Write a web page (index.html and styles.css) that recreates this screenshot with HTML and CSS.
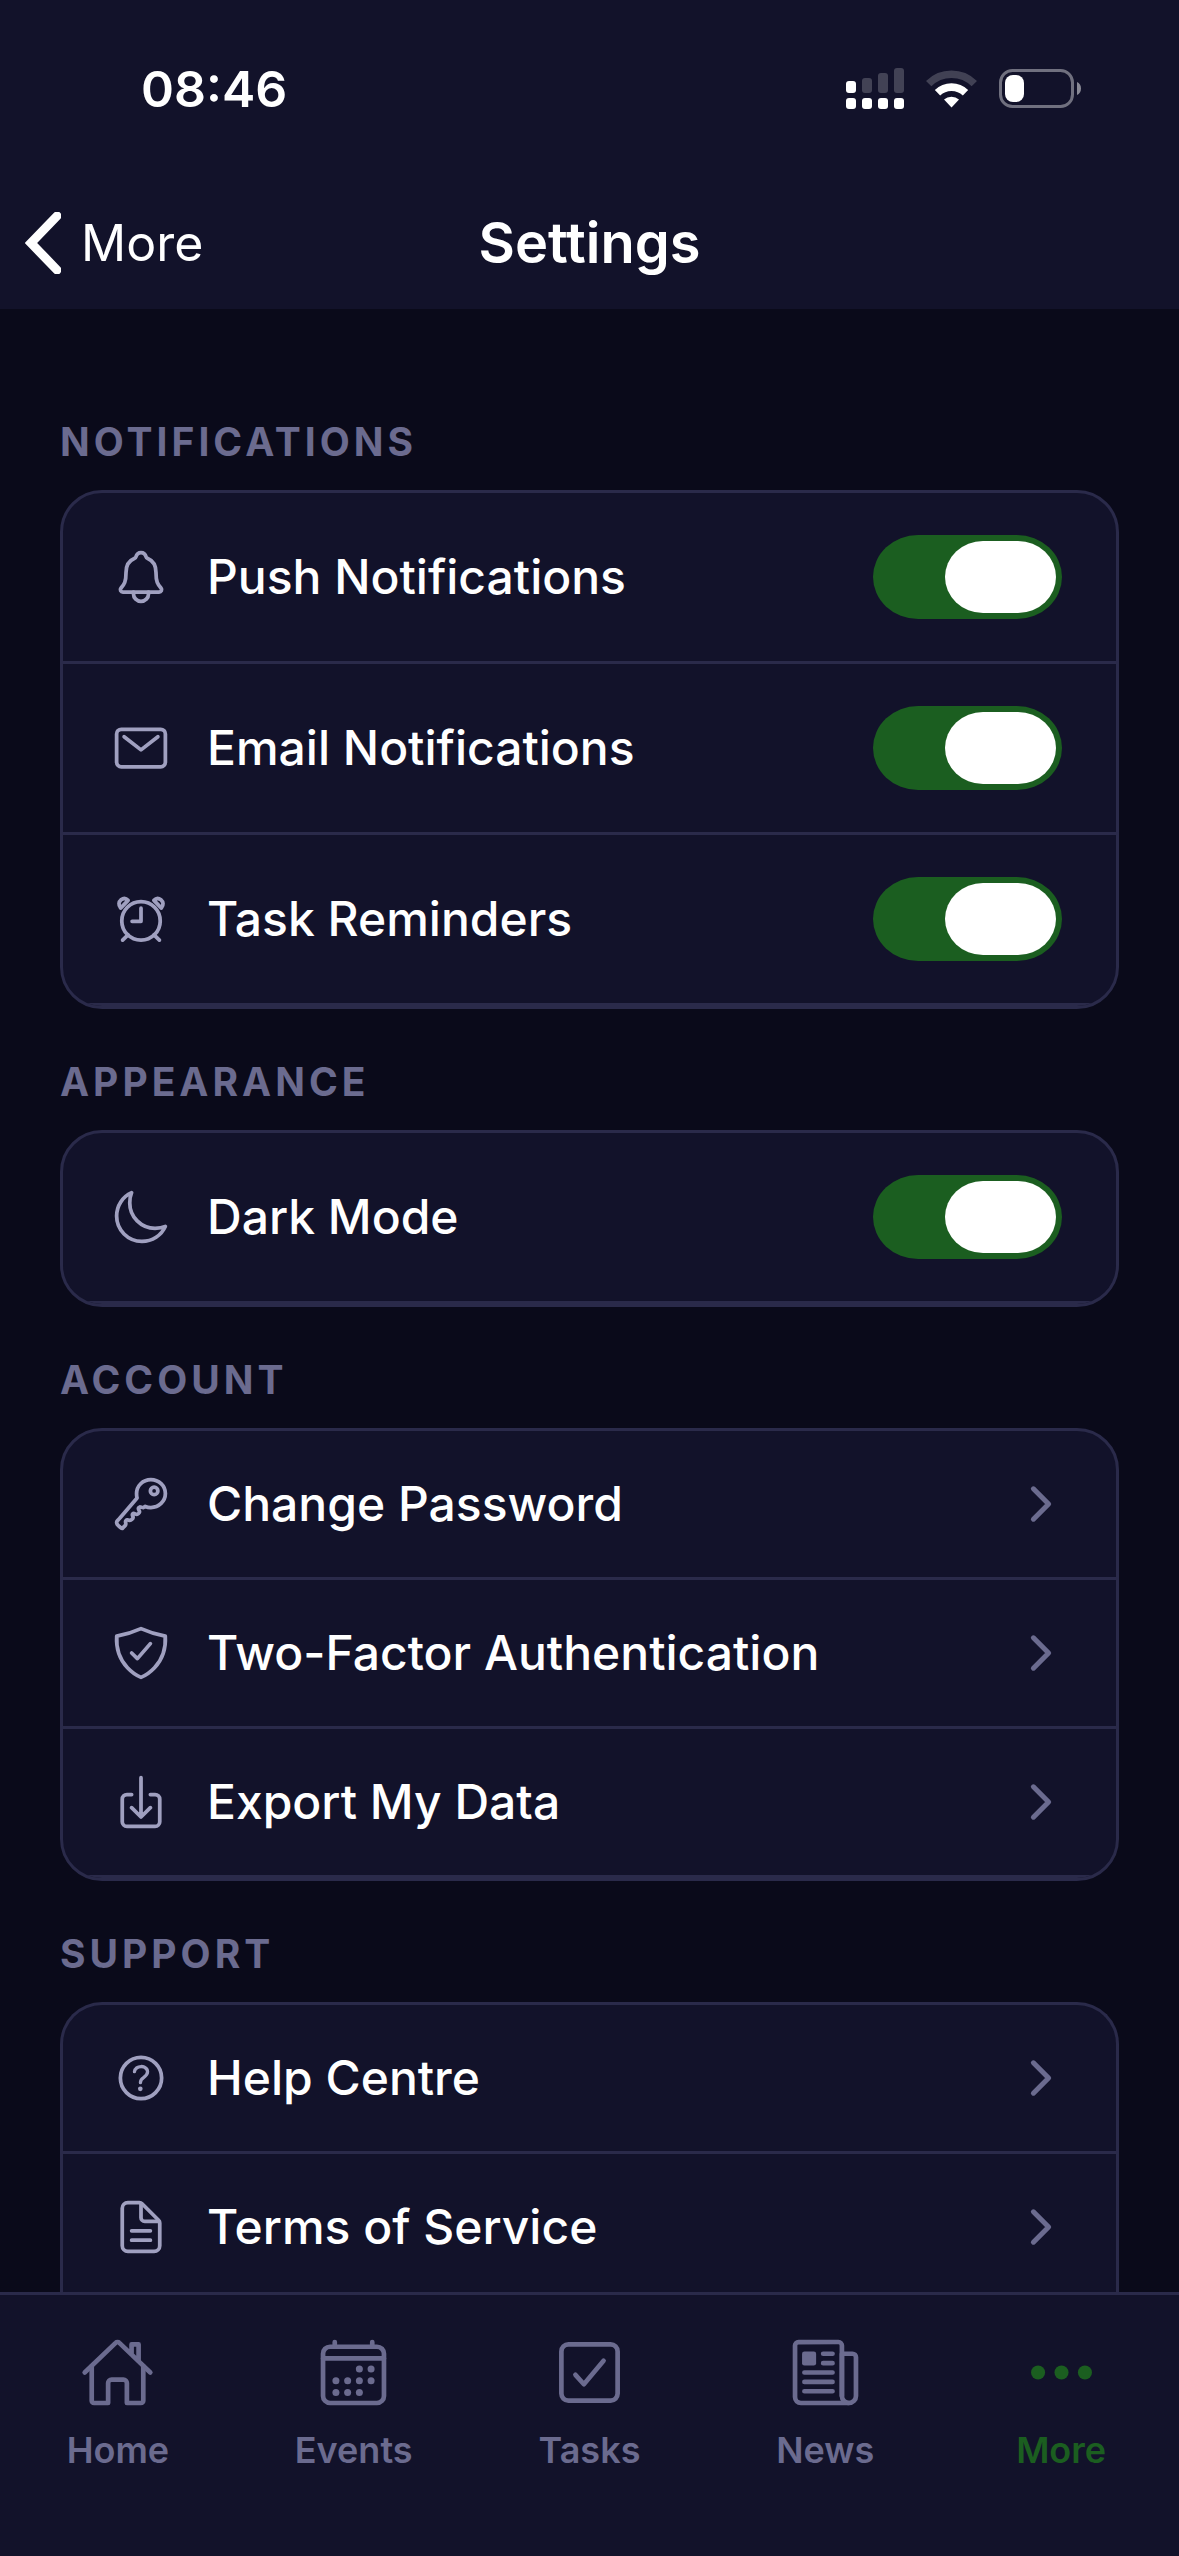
FILE: index.html
```html
<!DOCTYPE html>
<html lang="en">
<head>

<meta charset="UTF-8">
<meta name="viewport" content="width=device-width">

<title>Settings</title>

<link rel="stylesheet" href="styles.css">

</head>
<body>

<header class="header">
	<div class="statusbar">
		<time class="clock">08:46</time>
		<div class="indicators">
			<svg width="58" height="42" viewBox="0 0 58 42" fill="#fff">
				<rect x="0" y="13" width="10" height="12" rx="3"/>
				<g opacity=".2">
					<rect x="16" y="10" width="10" height="15" rx="3"/>
					<rect x="32" y="5" width="10" height="20" rx="3"/>
					<rect x="48" y="0" width="10" height="25" rx="3"/>
				</g>
				<rect x="0" y="30" width="10" height="11" rx="3"/>
				<rect x="16" y="30" width="10" height="11" rx="3"/>
				<rect x="32" y="30" width="10" height="11" rx="3"/>
				<rect x="48" y="30" width="10" height="11" rx="3"/>
			</svg>
			<svg width="51" height="38" viewBox="0 0 51 38" fill="none" stroke="#fff">
				<path d="M2.7 13.6A32.5 32.5 0 0 1 48.3 13.6" stroke-width="7.6" opacity=".2"/>
				<path d="M11.5 22.8A20 20 0 0 1 39.5 22.8" stroke-width="7.6"/>
				<path d="M18 29.6A11 11 0 0 1 33 29.6L25.5 37.5z" fill="#fff" stroke="none"/>
			</svg>
			<svg width="82" height="39" viewBox="0 0 82 39">
				<rect x="1.5" y="1.5" width="72" height="36" rx="12" fill="none" stroke="#fff" stroke-width="3" opacity=".4"/>
				<path d="M78 13c2.5 1 4 3.5 4 6.5s-1.5 5.5-4 6.5z" fill="#fff" opacity=".5"/>
				<rect x="6" y="6" width="19" height="27" rx="8" fill="#fff"/>
			</svg>
		</div>
	</div>
	<nav class="navbar">
		<a class="back" href="#more">
			<svg width="36" height="62" viewBox="0 0 36 62"><path d="M32 4L6 31l26 27" fill="none" stroke="#fff" stroke-width="9" stroke-linecap="round"/></svg>
			More
		</a>
		<h1 class="title">Settings</h1>
	</nav>
</header>

<main class="content">
	<section>
		<h2 class="heading">Notifications</h2>
		<div class="card">
			<label class="row">
				<svg class="icon" viewBox="0 0 512 512"><path d="M427.68 351.43C402 320 383.87 304 383.87 217.35 383.87 138 343.35 109.73 310 96c-4.43-1.82-8.6-6-9.95-10.55C294.2 65.54 277.8 48 256 48s-38.21 17.55-44 37.47c-1.35 4.6-5.52 8.71-9.95 10.53-33.39 13.75-73.87 41.92-73.87 121.35C128.13 304 110 320 84.32 351.43 73.68 364.45 83 384 101.61 384h308.88c18.51 0 27.77-19.61 17.19-32.57z"/><path d="M320 384v16a64 64 0 01-128 0v-16"/></svg>
				<span class="name">Push Notifications</span>
				<input class="toggle" type="checkbox" name="push" checked>
			</label>
			<label class="row">
				<svg class="icon" viewBox="0 0 512 512"><rect x="48" y="96" width="416" height="320" rx="40"/><path d="M112 160l144 112 144-112"/></svg>
				<span class="name">Email Notifications</span>
				<input class="toggle" type="checkbox" name="email" checked>
			</label>
			<label class="row">
				<svg class="icon" viewBox="0 0 512 512"><circle cx="256" cy="272" r="164"/><path d="M256 164v112h-76M145 391l-46 45M367 391l46 45"/><path d="M146 97C128 78 104 78 86 92 64 110 62 140 82 163z"/><path d="M366 97c18-19 42-19 60-5 22 18 24 48 4 71z"/></svg>
				<span class="name">Task Reminders</span>
				<input class="toggle" type="checkbox" name="tasks" checked>
			</label>
		</div>
	</section>

	<section>
		<h2 class="heading">Appearance</h2>
		<div class="card">
			<label class="row">
				<svg class="icon" viewBox="0 0 512 512"><path d="M160 136c0-30.62 4.51-61.61 16-88C99.57 81.27 48 159.32 48 248c0 119.29 96.71 216 216 216 88.68 0 166.73-51.57 200-128-26.39 11.49-57.38 16-88 16-119.29 0-216-96.71-216-216z"/></svg>
				<span class="name">Dark Mode</span>
				<input class="toggle" type="checkbox" name="dark" checked>
			</label>
		</div>
	</section>

	<section>
		<h2 class="heading">Account</h2>
		<div class="card">
			<a class="row" href="#password">
				<svg class="icon" viewBox="0 0 512 512"><path d="M218.1 167.17c0 13 0 25.6 4.1 37.4-43.1 50.6-156.9 184.3-167.5 194.5a20.17 20.17 0 00-6.7 15c0 8.5 5.2 16.7 9.6 21.3 6.6 6.9 34.8 33 40 28 15.4-15 18.5-19 24.8-25.2 9.5-9.3-1-28.3 2.3-36s6.8-9.2 12.5-10.4 15.8 2.9 23.7 3c8.3.1 12.8-3.4 19-9.2 5-4.6 8.6-8.9 8.7-15.6.2-9-12.8-20.9-3.1-30.4s23.7 6.2 34 5 22.8-15.5 24.1-21.6-11.7-21.8-9.7-30.7c.7-3 6.8-10 11.4-11s25 6.9 29.6 5.9c5.6-1.2 12.1-7.1 17.4-10.4 15.5 6.7 29.6 9.4 47.7 9.4 68.5 0 124-53.4 124-119.2S408.5 48 340 48s-121.9 53.37-121.9 119.17zM400 144a32 32 0 11-32-32 32 32 0 0132 32z"/></svg>
				<span class="name">Change Password</span>
				<svg class="chevron" viewBox="0 0 512 512"><path d="M184 112l144 144-144 144"/></svg>
			</a>
			<a class="row" href="#two-factor">
				<svg class="icon" viewBox="0 0 512 512"><path d="M336 176L225.2 304 176 255.8"/><path d="M463.1 112.37C373.68 96.33 336.71 84.45 256 48c-80.71 36.45-117.68 48.33-207.1 64.37C32.7 369.13 240.58 457.79 256 464c15.42-6.21 223.3-94.87 207.1-351.63z"/></svg>
				<span class="name">Two-Factor Authentication</span>
				<svg class="chevron" viewBox="0 0 512 512"><path d="M184 112l144 144-144 144"/></svg>
			</a>
			<a class="row" href="#export">
				<svg class="icon" viewBox="0 0 512 512"><path d="M336 192h40a40 40 0 0140 40v192a40 40 0 01-40 40H136a40 40 0 01-40-40V232a40 40 0 0140-40h40"/><path d="M336 304l-80 80-80-80M256 48v320"/></svg>
				<span class="name">Export My Data</span>
				<svg class="chevron" viewBox="0 0 512 512"><path d="M184 112l144 144-144 144"/></svg>
			</a>
		</div>
	</section>

	<section>
		<h2 class="heading">Support</h2>
		<div class="card open">
			<a class="row" href="#help">
				<svg class="icon" viewBox="0 0 512 512"><circle cx="256" cy="256" r="176"/><path stroke-width="28" d="M200 202.29s.84-17.5 19.57-32.57C230.68 160.77 244 158.18 256 158c10.93-.14 20.69 1.67 26.53 4.45 10 4.76 29.47 16.38 29.47 41.09 0 26-17 37.81-36.37 50.8S251 281.43 251 296"/><circle class="solid" cx="250" cy="348" r="20"/></svg>
				<span class="name">Help Centre</span>
				<svg class="chevron" viewBox="0 0 512 512"><path d="M184 112l144 144-144 144"/></svg>
			</a>
			<a class="row" href="#terms">
				<svg class="icon" viewBox="0 0 512 512"><path d="M416 221.25V416a48 48 0 01-48 48H144a48 48 0 01-48-48V96a48 48 0 0148-48h98.75a32 32 0 0122.62 9.37l141.26 141.26a32 32 0 019.37 22.62z"/><path d="M256 56v120a32 32 0 0032 32h120M176 288h160M176 368h160"/></svg>
				<span class="name">Terms of Service</span>
				<svg class="chevron" viewBox="0 0 512 512"><path d="M184 112l144 144-144 144"/></svg>
			</a>
		</div>
	</section>
</main>

<nav class="tabbar">
	<a class="tab" href="#home">
		<svg class="tabicon" viewBox="0 0 512 512"><path d="M80 212v236a16 16 0 0016 16h96V328a24 24 0 0124-24h80a24 24 0 0124 24v136h96a16 16 0 0016-16V212"/><path d="M480 256L266.89 52c-5-5.28-16.69-5.34-21.78 0L32 256M400 179V64h-48v69"/></svg>
		Home
	</a>
	<a class="tab" href="#events">
		<svg class="tabicon" viewBox="0 0 512 512"><rect x="48" y="80" width="416" height="384" rx="48"/><path d="M128 48v32M384 48v32M464 160H48"/><g class="solid"><circle cx="296" cy="232" r="24"/><circle cx="376" cy="232" r="24"/><circle cx="136" cy="312" r="24"/><circle cx="216" cy="312" r="24"/><circle cx="296" cy="312" r="24"/><circle cx="376" cy="312" r="24"/><circle cx="136" cy="392" r="24"/><circle cx="216" cy="392" r="24"/><circle cx="296" cy="392" r="24"/></g></svg>
		Events
	</a>
	<a class="tab" href="#tasks">
		<svg class="tabicon" viewBox="0 0 512 512"><path d="M352 176L217.6 336 160 272"/><rect x="64" y="64" width="384" height="384" rx="48"/></svg>
		Tasks
	</a>
	<a class="tab" href="#news">
		<svg class="tabicon" viewBox="0 0 512 512"><path d="M368 415.86V72a24.07 24.07 0 00-24-24H72a24.07 24.07 0 00-24 24v352a40.12 40.12 0 0040 40h328"/><path d="M416 464a48 48 0 01-48-48V128h72a24 24 0 0124 24v264a48 48 0 01-48 48z"/><path d="M240 128h64M240 192h64M112 256h192M112 320h192M112 384h192"/><rect class="solid" x="96" y="112" width="96" height="96" rx="16"/></svg>
		News
	</a>
	<a class="tab active" href="#more" aria-current="page">
		<svg class="tabicon" viewBox="0 0 512 512"><g class="solid"><circle cx="96" cy="256" r="48"/><circle cx="256" cy="256" r="48"/><circle cx="416" cy="256" r="48"/></g></svg>
		More
	</a>
</nav>

</body>
</html>
```
FILE: styles.css
```css
html, body {
	height: 100%;
	margin: 0;
}
body {
	display: flex;
	flex-direction: column;
	background: #0a0a1a;
	color: white;
	font-family: Inter, "Liberation Sans", sans-serif;
	font-size: 50px;
}
a {
	color: inherit;
	text-decoration: none;
}

.header {
	background: #12122a;
}
.statusbar {
	display: flex;
	align-items: center;
	justify-content: space-between;
	height: 177px;
	padding: 0 98px 0 141px;
}
.clock {
	font-weight: 600;
}
.indicators {
	display: flex;
	align-items: center;
	gap: 22px;
}
.navbar {
	display: grid;
	grid-template-columns: 1fr auto 1fr;
	align-items: center;
	height: 132px;
	padding: 0 25px;
}
.back {
	display: flex;
	align-items: center;
	gap: 20px;
}
.title {
	margin: 0;
	font-size: 56px;
	font-weight: 600;
}

.content {
	flex: 1;
	min-height: 0;
	padding: 60px 60px 0;
	overflow: auto;
	scrollbar-width: none;
}
.heading {
	margin: 0;
	padding: 49px 0 24px;
	color: #6b6b8f;
	font-size: 39px;
	font-weight: 700;
	line-height: 48px;
	letter-spacing: 4px;
	text-transform: uppercase;
}
.card {
	overflow: hidden;
	border: 3px solid #2a2a4a;
	border-radius: 42px;
	background: #12122a;
}
/* runs on under the tab bar */
.card.open {
	border-bottom: 0;
	border-radius: 42px 42px 0 0;
}
.row {
	display: flex;
	align-items: center;
	gap: 36px;
	padding: 42px 48px;
	border-bottom: 3px solid #2a2a4a;
}
.name {
	flex: 1;
	font-size: 48px;
	font-weight: 500;
	line-height: 62px;
}

.icon, .chevron, .tabicon {
	flex: none;
	fill: none;
	stroke: currentColor;
	stroke-width: 32;
	stroke-linecap: round;
	stroke-linejoin: round;
}
.icon {
	width: 60px;
	height: 60px;
	color: #a0a0c0;
}
.chevron {
	width: 54px;
	height: 54px;
	color: #6b6b8f;
	stroke-width: 48;
}
.solid {
	fill: currentColor;
	stroke: none;
}

.toggle {
	appearance: none;
	display: flex;
	width: 189px;
	height: 84px;
	margin: 0 6px 0 0;
	padding: 6px;
	box-sizing: border-box;
	border-radius: 45px / 42px;
	background: #2a2a4a;
}
.toggle::before {
	content: "";
	width: 111px;
	border-radius: 38px / 36px;
	background: white;
}
.toggle:checked {
	justify-content: flex-end;
	background: #1b5e20;
}

.tabbar {
	display: grid;
	grid-template-columns: repeat(5, 1fr);
	padding: 40px 0 84px;
	border-top: 3px solid #2a2a4a;
	background: #12122a;
}
.tab {
	display: flex;
	flex-direction: column;
	align-items: center;
	gap: 18px;
	color: #6b6b8f;
	font-size: 36px;
	font-weight: 600;
	line-height: 44px;
}
.tabicon {
	width: 75px;
	height: 75px;
}
.tab.active {
	color: #1b5e20;
}
```
